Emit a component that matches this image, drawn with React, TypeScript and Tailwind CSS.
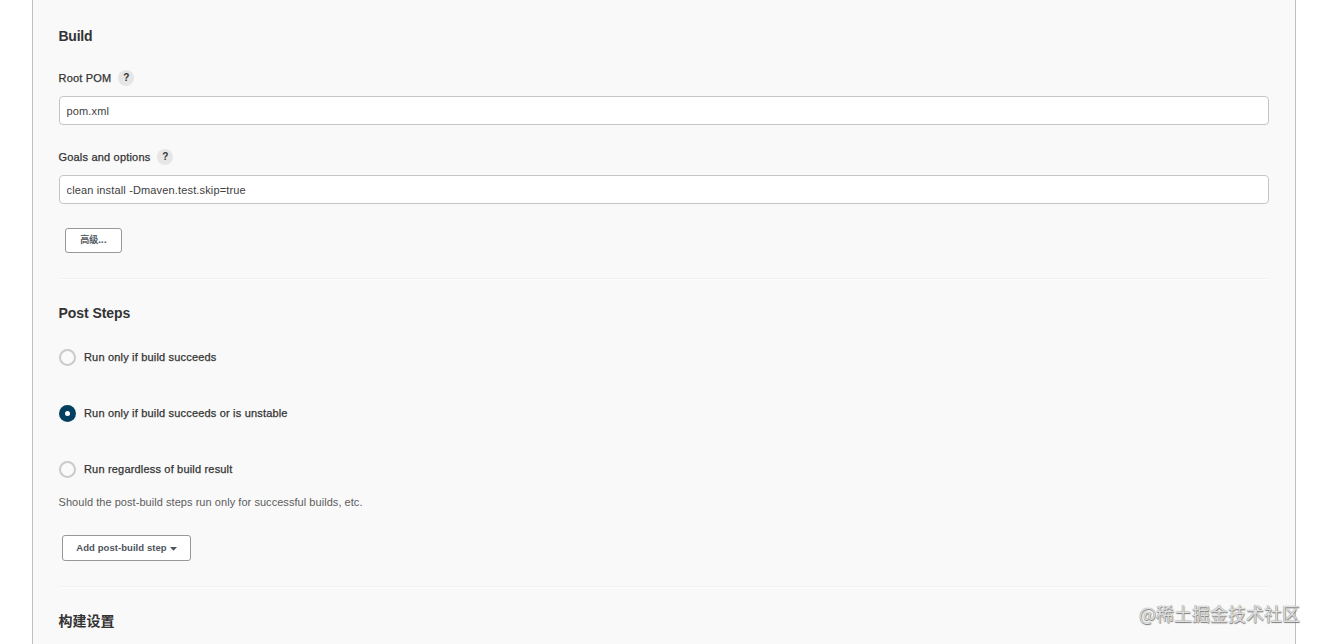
import React, { useState } from 'react';

const TRIGGERS = [
  { id: 'success', label: 'Run only if build succeeds' },
  { id: 'unstable', label: 'Run only if build succeeds or is unstable' },
  { id: 'always', label: 'Run regardless of build result' },
];

interface FieldProps {
  label: string;
  value: string;
  onChange: (value: string) => void;
}

function Field({ label, value, onChange }: FieldProps) {
  return (
    <div>
      <div className="flex h-4 items-center gap-[7px]">
        <label className="-ml-[0.5px] text-[11px] leading-4 tracking-[0.19px] text-[#333] [-webkit-text-stroke:0.25px_#333]">
          {label}
        </label>
        <button className="flex h-4 w-4 items-center justify-center rounded-full bg-[#e6e6e6] text-[10px] font-bold leading-none text-[#333]">
          ?
        </button>
      </div>
      <input
        className="mt-2.5 block h-[29px] w-full rounded-[4px] border border-[#c3c6c8] bg-white px-[6.5px] text-[11px] tracking-[0.15px] text-[#404040] outline-none"
        value={value}
        onChange={e => onChange(e.target.value)}
      />
    </div>
  );
}

export default function App() {
  const [rootPom, setRootPom] = useState('pom.xml');
  const [goals, setGoals] = useState('clean install -Dmaven.test.skip=true');
  const [trigger, setTrigger] = useState('unstable');

  return (
    <div className="relative h-[644px] w-[1319px] overflow-hidden bg-white pl-8 font-['Liberation_Sans','Noto_Sans_CJK_SC',sans-serif]">
      <div className="h-full w-[1264px] border-x border-[#bfbfbf] bg-[#f9f9f9] px-[26px] pt-[26px]">
        <h2 className="-ml-[0.5px] h-5 text-[14px] font-bold leading-5 tracking-[-0.25px] text-[#333]">Build</h2>

        <div className="mt-6 flex flex-col gap-6">
          <Field label="Root POM" value={rootPom} onChange={setRootPom} />
          <Field label="Goals and options" value={goals} onChange={setGoals} />
        </div>

        <button className="ml-1.5 mt-6 flex h-[25px] w-[57px] items-center justify-center rounded-[3px] border border-[#96999b] bg-white text-[9px] font-medium text-[#4d545d] [-webkit-text-stroke:0.2px_#4d545d]">
          高级<span className="font-bold tracking-[0.3px]">...</span>
        </button>

        <div className="mt-[25px] h-0.5 border-t border-[#f1f1f1] bg-[#fdfdfd]" />

        <h2 className="-ml-[0.5px] mt-[23px] h-5 text-[14px] font-bold leading-5 tracking-[-0.06px] text-[#333]">
          Post Steps
        </h2>

        <div className="mt-[26px] flex flex-col gap-[39px]">
          {TRIGGERS.map(item => (
            <label key={item.id} className="flex h-[17px] items-center gap-2">
              <input
                type="radio"
                name="trigger"
                className="sr-only"
                checked={trigger === item.id}
                onChange={() => setTrigger(item.id)}
              />
              <span
                className={`flex h-[17px] w-[17px] items-center justify-center rounded-full ${
                  trigger === item.id ? 'bg-[#043f5f]' : 'border-2 border-[#c8cbcb] bg-[#fafafa]'
                }`}
              >
                {trigger === item.id && <span className="h-[5px] w-[5px] rounded-full bg-white" />}
              </span>
              <span className="pb-px text-[11px] leading-4 tracking-[0.18px] text-[#333] [-webkit-text-stroke:0.25px_#333]">
                {item.label}
              </span>
            </label>
          ))}
        </div>

        <p className="-ml-[0.5px] mt-4 h-4 text-[11px] leading-4 tracking-[0.05px] text-[#5c5c5c]">
          Should the post-build steps run only for successful builds, etc.
        </p>

        <button className="ml-[3px] mt-[25px] flex h-[26px] w-[129px] items-center justify-center gap-[3px] rounded-[3px] border border-[#96999b] bg-white text-[9.5px] font-bold tracking-[0.06px] text-[#4d545d]">
          Add post-build step
          <svg className="mt-0.5 h-1 w-[7px]" viewBox="0 0 7 4" fill="currentColor">
            <path d="M0 0h7L3.5 3.8z" />
          </svg>
        </button>

        <div className="mt-[25px] h-0.5 border-t border-[#f1f1f1] bg-[#fdfdfd]" />

        <h2 className="-ml-[0.5px] mt-[23px] h-5 text-[14px] font-bold leading-5 text-[#333]">构建设置</h2>
      </div>

      <div className="absolute left-[1139px] top-[601px] whitespace-nowrap font-['Noto_Sans_CJK_SC',sans-serif] text-[18px] leading-6 text-[#dedede] [text-shadow:0_0_1px_#777,0.5px_0.5px_1px_#777]">
        @稀土掘金技术社区
      </div>
    </div>
  );
}
